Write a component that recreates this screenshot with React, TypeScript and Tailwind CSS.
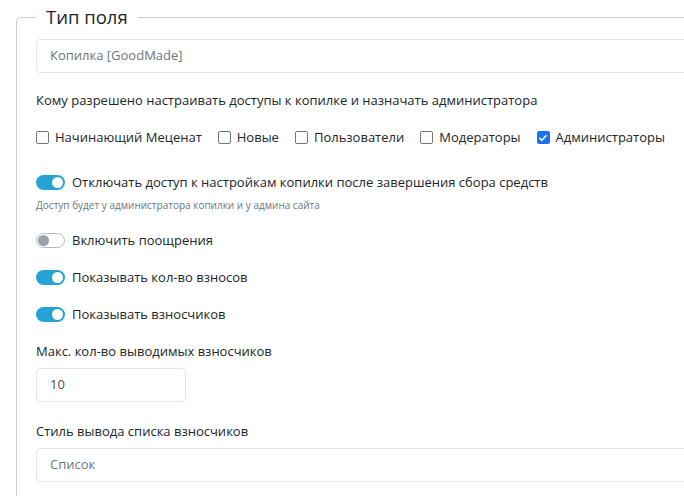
import React from "react";

type Toggle = {
  label: string;
  on: boolean;
  hint?: string;
};

const roles = [
  { label: "Начинающий Меценат", checked: false },
  { label: "Новые", checked: false },
  { label: "Пользователи", checked: false },
  { label: "Модераторы", checked: false },
  { label: "Администраторы", checked: true },
];

const toggles: Toggle[] = [
  {
    label: "Отключать доступ к настройкам копилки после завершения сбора средств",
    on: true,
    hint: "Доступ будет у администратора копилки и у админа сайта",
  },
  { label: "Включить поощрения", on: false },
  { label: "Показывать кол-во взносов", on: true },
  { label: "Показывать взносчиков", on: true },
];

function Checkbox({ checked }: { checked: boolean }) {
  if (checked) {
    return (
      <span className="flex h-[13px] w-[13px] shrink-0 items-center justify-center rounded-[2px] bg-[#1a73e8]">
        <svg viewBox="0 0 12 12" className="h-[10px] w-[10px]" fill="none">
          <path d="M2.2 6.3l2.4 2.4 5-5.4" stroke="#fff" strokeWidth="2" strokeLinecap="round" strokeLinejoin="round" />
        </svg>
      </span>
    );
  }
  return <span className="h-[13px] w-[13px] shrink-0 rounded-[2px] border border-[#767676] bg-white" />;
}

function Switch({ on }: { on: boolean }) {
  return on ? (
    <span className="flex h-[15px] w-[29px] shrink-0 items-center justify-end rounded-full bg-[#25a3d6] px-[2px]">
      <span className="h-[11px] w-[11px] rounded-full bg-white" />
    </span>
  ) : (
    <span className="flex h-[15px] w-[29px] shrink-0 items-center rounded-full border border-[#b5b9bd] bg-white px-[1px]">
      <span className="h-[11px] w-[11px] rounded-full bg-[#9ba1a8]" />
    </span>
  );
}

export default function App() {
  return (
    <div className="h-[496px] w-[684px] overflow-hidden bg-white font-['Open_Sans',sans-serif] text-[13px] text-[#212529]">
      <fieldset className="ml-4 mt-[5px] w-[720px] rounded-[4px] border border-[#cfd2d5] pb-10 pl-[19px] pr-4">
        <legend className="px-[10px] text-[18.5px] leading-[24px] text-[#212529]">Тип поля</legend>

        <div className="mt-[10px] flex h-[34px] items-center rounded-[4px] border border-[#e1e4e7] px-[13px] text-[#6c757d]">
          Копилка [GoodMade]
        </div>

        <p className="mt-[17px] leading-[21px]">
          Кому разрешено настраивать доступы к копилке и назначать администратора
        </p>

        <div className="mt-[16px] flex h-[21px] items-center gap-x-[16px]">
          {roles.map((role) => (
            <label key={role.label} className="flex items-center gap-[6px]">
              <Checkbox checked={role.checked} />
              <span>{role.label}</span>
            </label>
          ))}
        </div>

        <div className="mt-[24px] space-y-[16px]">
          {toggles.map((toggle) => (
            <div key={toggle.label}>
              <div className="flex h-[21px] items-center gap-[7px]">
                <Switch on={toggle.on} />
                <span>{toggle.label}</span>
              </div>
              {toggle.hint ? (
                <p className="mt-[5px] pb-[2px] text-[10px] leading-[14px] text-[#6c757d]">{toggle.hint}</p>
              ) : null}
            </div>
          ))}
        </div>

        <p className="mt-[16px] leading-[21px]">Макс. кол-во выводимых взносчиков</p>
        <div className="mt-[6px] flex h-[34px] w-[150px] items-center rounded-[4px] border border-[#e1e4e7] px-[13px] text-[#495057]">
          10
        </div>

        <p className="mt-[19px] leading-[21px]">Стиль вывода списка взносчиков</p>
        <div className="mt-[6px] flex h-[34px] items-center rounded-[4px] border border-[#e1e4e7] px-[13px] text-[#6c757d]">
          Список
        </div>
      </fieldset>
    </div>
  );
}
